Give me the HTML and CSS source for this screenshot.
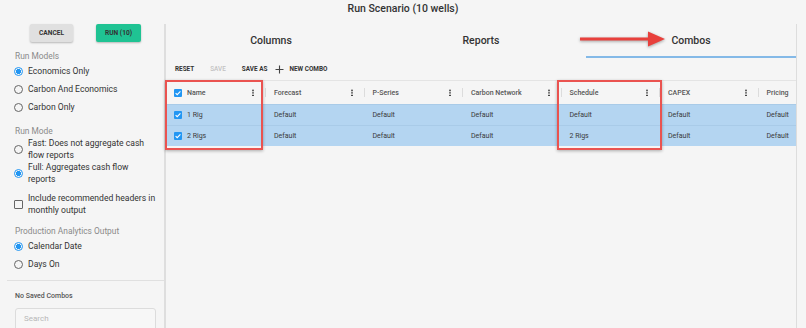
FILE: index.html
```html
<!DOCTYPE html>
<html lang="en">
<head>
    <meta charset="UTF-8">
    <title>Run Scenario</title>
    <link rel="stylesheet" href="styles.css">
</head>
<body>
    <div class="title">Run Scenario (10 wells)</div>
    <div class="main">
        <div class="sidebar">
            <div class="actions">
                <button class="btn btn-cancel">CANCEL</button>
                <button class="btn btn-run">RUN (10)</button>
            </div>

            <div class="group-label first">Run Models</div>
            <label class="option"><span class="radio on"></span><span>Economics Only</span></label>
            <label class="option"><span class="radio"></span><span>Carbon And Economics</span></label>
            <label class="option"><span class="radio"></span><span>Carbon Only</span></label>

            <div class="group-label">Run Mode</div>
            <label class="option tall"><span class="radio"></span><span class="txt">Fast: Does not aggregate cash<br>flow reports</span></label>
            <label class="option tall"><span class="radio on"></span><span class="txt">Full: Aggregates cash flow<br>reports</span></label>

            <label class="option tall check-row"><span class="box"></span><span class="txt">Include recommended headers in<br>monthly output</span></label>

            <div class="group-label">Production Analytics Output</div>
            <label class="option"><span class="radio on"></span><span>Calendar Date</span></label>
            <label class="option"><span class="radio"></span><span>Days On</span></label>

            <div class="divider"></div>
            <div class="saved">No Saved Combos</div>
            <div class="search">Search</div>
        </div>

        <div class="content">
            <div class="tabs">
                <div class="tab">Columns</div>
                <div class="tab">Reports</div>
                <div class="tab active">Combos</div>
            </div>
            <div class="toolbar">
                <span class="tool">RESET</span>
                <span class="tool disabled">SAVE</span>
                <span class="tool">SAVE AS</span>
                <span class="tool plus">
                    <svg width="9" height="9" viewBox="0 0 9 9"><path d="M4.5 0.5v8M0.5 4.5h8" stroke="#444" stroke-width="1.1"/></svg>
                    NEW COMBO
                </span>
            </div>

            <div class="grid">
                <div class="row head">
                    <div class="cell name"><span class="cb"></span>Name<i class="kebab"></i></div>
                    <div class="cell">Forecast<i class="kebab"></i></div>
                    <div class="cell">P-Series<i class="kebab"></i></div>
                    <div class="cell">Carbon Network<i class="kebab"></i></div>
                    <div class="cell">Schedule<i class="kebab"></i></div>
                    <div class="cell">CAPEX<i class="kebab"></i></div>
                    <div class="cell">Pricing</div>
                </div>
                <div class="row sel">
                    <div class="cell name"><span class="cb"></span>1 Rig</div>
                    <div class="cell">Default</div>
                    <div class="cell">Default</div>
                    <div class="cell">Default</div>
                    <div class="cell">Default</div>
                    <div class="cell">Default</div>
                    <div class="cell">Default</div>
                </div>
                <div class="row sel">
                    <div class="cell name"><span class="cb"></span>2 Rigs</div>
                    <div class="cell">Default</div>
                    <div class="cell">Default</div>
                    <div class="cell">Default</div>
                    <div class="cell">2 Rigs</div>
                    <div class="cell">Default</div>
                    <div class="cell">Default</div>
                </div>
            </div>

            <div class="mark mark-name"></div>
            <div class="mark mark-schedule"></div>
            <svg class="arrow" width="96" height="22" viewBox="0 0 96 22">
                <path d="M4 9.5h68v-6l17 7.5-17 7.5v-6H4z" fill="#e8403c"/>
            </svg>
        </div>
    </div>
</body>
</html>
```

FILE: styles.css
```css
body {
    margin: 0;
    width: 806px;
    height: 328px;
    overflow: hidden;
    background: #f5f5f5;
    font-family: Roboto, "Liberation Sans", sans-serif;
    color: #333;
}
.title {
    height: 24px;
    line-height: 18px;
    text-align: center;
    font-size: 10.5px;
    font-weight: 500;
    color: #333;
}
.main {
    display: flex;
    height: 304px;
}

/* left panel */
.sidebar {
    width: 149px;
    padding-left: 15px;
    border-right: 2px solid #dedede;
    font-size: 8.6px;
    color: #333;
}
.actions {
    display: flex;
    gap: 23px;
    padding-left: 15px;
}
.btn {
    height: 18px;
    border: none;
    border-radius: 2px;
    font-family: Roboto, "Liberation Sans", sans-serif;
    font-size: 6.6px;
    font-weight: 700;
    color: #333;
    padding: 0;
    box-shadow: 0 1px 2px rgba(0, 0, 0, 0.25);
}
.btn-cancel {
    width: 43px;
    background: #e0e0e0;
}
.btn-run {
    width: 45px;
    background: #1fc393;
}
.group-label {
    margin-top: 9px;
    height: 12px;
    line-height: 12px;
    color: #8a8a8a;
    font-size: 8.4px;
}
.group-label.first {
    margin-top: 8px;
}
.option {
    display: flex;
    align-items: center;
    gap: 5px;
    height: 18px;
}
.option.tall {
    height: 24px;
}
.txt {
    line-height: 12px;
}
.check-row {
    margin-top: 7px;
}
.radio {
    flex: none;
    width: 7px;
    height: 7px;
    border: 1.2px solid #666;
    border-radius: 50%;
    margin-left: -1px;
}
.radio.on {
    border-color: #2196f3;
    background: radial-gradient(circle, #2196f3 0 2.3px, transparent 2.8px);
}
.box {
    flex: none;
    width: 7px;
    height: 7px;
    border: 1.2px solid #666;
    border-radius: 1px;
    margin-left: -1px;
}
.divider {
    margin: 7px 0 0 -8px;
    border-top: 1px solid #e0e0e0;
}
.saved {
    margin-top: 9px;
    height: 12px;
    line-height: 12px;
    font-size: 7px;
    font-weight: 500;
    color: #555;
}
.search {
    margin-top: 6px;
    width: 131px;
    height: 22px;
    padding-left: 8px;
    line-height: 20px;
    background: #f7f7f7;
    border: 1px solid #dcdcdc;
    border-radius: 3px;
    font-size: 8px;
    color: #b8b8b8;
}

/* right panel */
.content {
    position: relative;
    width: 630px;
    border-right: 1px solid #dddddd;
}
.tabs {
    display: grid;
    grid-template-columns: repeat(3, 1fr);
    height: 34px;
}
.tab {
    display: flex;
    align-items: center;
    justify-content: center;
    padding-bottom: 2px;
    font-size: 10.5px;
    font-weight: 500;
    color: #333;
}
.tab.active {
    border-bottom: 2px solid #84b9e7;
    padding-bottom: 0;
}
.toolbar {
    display: flex;
    align-items: center;
    gap: 16px;
    height: 22px;
    padding-left: 9px;
}
.tool {
    font-size: 6.4px;
    font-weight: 700;
    color: #333;
}
.tool.disabled {
    color: #c2c2c2;
    font-weight: 500;
}
.tool.plus {
    display: flex;
    align-items: center;
    gap: 5px;
    margin-left: -8px;
}
.grid {
    border-top: 1px solid #e4e4e4;
    overflow: hidden;
}
.row {
    display: grid;
    grid-template-columns: 98px repeat(6, 98.5px);
    height: 21px;
    font-size: 7px;
}
.row.head {
    height: 23px;
    font-weight: 500;
    color: #555;
}
.row.sel {
    background: #b4d5f1;
    border-top: 1px solid #a9cbe8;
    height: 20px;
    color: #3a3a3a;
}
.cell {
    position: relative;
    display: flex;
    align-items: center;
    padding-left: 10px;
    white-space: nowrap;
}
.cell.name {
    padding-left: 8px;
}
.head .cell::after {
    content: "";
    position: absolute;
    right: -2px;
    top: 7px;
    height: 9px;
    border-left: 1px solid #dcdcdc;
}
.head .cell:last-child::after {
    display: none;
}
.kebab {
    position: absolute;
    right: 10px;
    top: 8px;
    width: 1.6px;
    height: 7px;
    background: radial-gradient(circle, #444 0.8px, transparent 1px) 0 0 / 1.6px 2.6px repeat-y;
}
.cb {
    width: 8px;
    height: 8px;
    margin-right: 5px;
    border-radius: 1px;
    background: #2196f3 url("data:image/svg+xml,%3Csvg xmlns='http://www.w3.org/2000/svg' viewBox='0 0 8 8'%3E%3Cpath d='M1.6 4.1l1.6 1.6 3.2-3.3' fill='none' stroke='white' stroke-width='1.1'/%3E%3C/svg%3E") no-repeat center/8px;
}

/* annotation overlays */
.mark {
    position: absolute;
    top: 56px;
    height: 66px;
    border: 2px solid #ea5350;
    box-shadow: 0 1px 3px rgba(0, 0, 0, 0.3);
}
.mark-name {
    left: -1px;
    width: 94px;
}
.mark-schedule {
    left: 391px;
    width: 101px;
}
.arrow {
    position: absolute;
    left: 410px;
    top: 4px;
    filter: drop-shadow(0 1px 1.5px rgba(0, 0, 0, 0.35));
}
```
